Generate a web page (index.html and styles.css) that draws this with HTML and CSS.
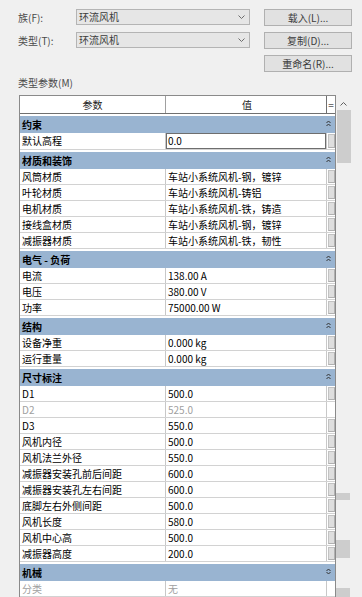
FILE: index.html
```html
<!DOCTYPE html>
<html lang="zh-CN">
<head>
<meta charset="utf-8">
<title>类型属性</title>
<link rel="stylesheet" href="styles.css">
</head>
<body>
<div class="panel">
  <div class="top">
    <span class="lbl">族(F):</span>
    <div class="sel"><span>环流风机</span><svg class="chev" width="7" height="4" viewBox="0 0 7 4"><polyline points="0.5,0.5 3.5,3.5 6.5,0.5" fill="none" stroke="#6d6d6d" stroke-width="1"/></svg></div>
    <button class="btn">载入(L)...</button>
    <span class="lbl">类型(T):</span>
    <div class="sel"><span>环流风机</span><svg class="chev" width="7" height="4" viewBox="0 0 7 4"><polyline points="0.5,0.5 3.5,3.5 6.5,0.5" fill="none" stroke="#6d6d6d" stroke-width="1"/></svg></div>
    <button class="btn">复制(D)...</button>
    <button class="btn">重命名(R)...</button>
  </div>
  <div class="caption">类型参数(M)</div>
  <div class="gridwrap">
    <div class="grid">
      <div class="hdr"><div class="c name">参数</div><div class="c val">值</div><div class="c eq">=</div></div>

      <div class="cat"><span>约束</span><svg class="col" width="5" height="7" viewBox="0 0 5 7"><polyline points="0.5,3 2.5,1 4.5,3" fill="none" stroke="#333" stroke-width="1"/><polyline points="0.5,6 2.5,4 4.5,6" fill="none" stroke="#333" stroke-width="1"/></svg></div>
      <div class="row first"><div class="c name">默认高程</div><div class="c val edit">0.0</div><div class="c eq"><i class="pb"></i></div></div>

      <div class="cat"><span>材质和装饰</span><svg class="col" width="5" height="7" viewBox="0 0 5 7"><polyline points="0.5,3 2.5,1 4.5,3" fill="none" stroke="#333" stroke-width="1"/><polyline points="0.5,6 2.5,4 4.5,6" fill="none" stroke="#333" stroke-width="1"/></svg></div>
      <div class="row"><div class="c name">风筒材质</div><div class="c val">车站小系统风机-钢，镀锌</div><div class="c eq"><i class="pb"></i></div></div>
      <div class="row"><div class="c name">叶轮材质</div><div class="c val">车站小系统风机-铸铝</div><div class="c eq"><i class="pb"></i></div></div>
      <div class="row"><div class="c name">电机材质</div><div class="c val">车站小系统风机-铁，铸造</div><div class="c eq"><i class="pb"></i></div></div>
      <div class="row"><div class="c name">接线盒材质</div><div class="c val">车站小系统风机-钢，镀锌</div><div class="c eq"><i class="pb"></i></div></div>
      <div class="row"><div class="c name">减振器材质</div><div class="c val">车站小系统风机-铁，韧性</div><div class="c eq"><i class="pb"></i></div></div>

      <div class="cat"><span>电气 - 负荷</span><svg class="col" width="5" height="7" viewBox="0 0 5 7"><polyline points="0.5,3 2.5,1 4.5,3" fill="none" stroke="#333" stroke-width="1"/><polyline points="0.5,6 2.5,4 4.5,6" fill="none" stroke="#333" stroke-width="1"/></svg></div>
      <div class="row"><div class="c name">电流</div><div class="c val">138.00 A</div><div class="c eq"><i class="pb"></i></div></div>
      <div class="row"><div class="c name">电压</div><div class="c val">380.00 V</div><div class="c eq"><i class="pb"></i></div></div>
      <div class="row"><div class="c name">功率</div><div class="c val">75000.00 W</div><div class="c eq"><i class="pb"></i></div></div>

      <div class="cat"><span>结构</span><svg class="col" width="5" height="7" viewBox="0 0 5 7"><polyline points="0.5,3 2.5,1 4.5,3" fill="none" stroke="#333" stroke-width="1"/><polyline points="0.5,6 2.5,4 4.5,6" fill="none" stroke="#333" stroke-width="1"/></svg></div>
      <div class="row"><div class="c name">设备净重</div><div class="c val">0.000 kg</div><div class="c eq"><i class="pb"></i></div></div>
      <div class="row"><div class="c name">运行重量</div><div class="c val">0.000 kg</div><div class="c eq"><i class="pb"></i></div></div>

      <div class="cat"><span>尺寸标注</span><svg class="col" width="5" height="7" viewBox="0 0 5 7"><polyline points="0.5,3 2.5,1 4.5,3" fill="none" stroke="#333" stroke-width="1"/><polyline points="0.5,6 2.5,4 4.5,6" fill="none" stroke="#333" stroke-width="1"/></svg></div>
      <div class="row"><div class="c name">D1</div><div class="c val">500.0</div><div class="c eq"><i class="pb"></i></div></div>
      <div class="row dim"><div class="c name">D2</div><div class="c val">525.0</div><div class="c eq"></div></div>
      <div class="row"><div class="c name">D3</div><div class="c val">550.0</div><div class="c eq"><i class="pb"></i></div></div>
      <div class="row"><div class="c name">风机内径</div><div class="c val">500.0</div><div class="c eq"><i class="pb"></i></div></div>
      <div class="row"><div class="c name">风机法兰外径</div><div class="c val">550.0</div><div class="c eq"><i class="pb"></i></div></div>
      <div class="row"><div class="c name">减振器安装孔前后间距</div><div class="c val">600.0</div><div class="c eq"><i class="pb"></i></div></div>
      <div class="row"><div class="c name">减振器安装孔左右间距</div><div class="c val">600.0</div><div class="c eq"><i class="pb"></i></div></div>
      <div class="row"><div class="c name">底脚左右外侧间距</div><div class="c val">500.0</div><div class="c eq"><i class="pb"></i></div></div>
      <div class="row"><div class="c name">风机长度</div><div class="c val">580.0</div><div class="c eq"><i class="pb"></i></div></div>
      <div class="row"><div class="c name">风机中心高</div><div class="c val">500.0</div><div class="c eq"><i class="pb"></i></div></div>
      <div class="row"><div class="c name">减振器高度</div><div class="c val">200.0</div><div class="c eq"><i class="pb"></i></div></div>

      <div class="cat"><span>机械</span><svg class="col" width="5" height="7" viewBox="0 0 5 7"><polyline points="0.5,3 2.5,1 4.5,3" fill="none" stroke="#333" stroke-width="1"/><polyline points="0.5,4 2.5,6 4.5,4" fill="none" stroke="#333" stroke-width="1"/></svg></div>
      <div class="row dim"><div class="c name">分类</div><div class="c val">无</div><div class="c eq"></div></div>
    </div>
    <div class="vscroll">
      <svg class="up" width="7" height="4" viewBox="0 0 7 4"><polyline points="0.5,3.5 3.5,0.5 6.5,3.5" fill="none" stroke="#606060" stroke-width="1"/></svg>
      <div class="thumb"></div>
      <div class="ghost g1"></div>
      <div class="ghost g2"></div>
      <div class="ghost g3"></div>
    </div>
  </div>
</div>
</body>
</html>
```

FILE: styles.css
```css
html, body {
  margin: 0;
  padding: 0;
}
body {
  width: 362px;
  height: 597px;
  overflow: hidden;
  background: #f0f0f0;
  font-family: "Noto Sans CJK SC", "Noto Sans", sans-serif;
  font-size: 10px;
  color: #000;
}
.panel {
  padding: 9px 0 0 18px;
}
.top {
  display: grid;
  grid-template-columns: 58px 174px 14px 88px;
  grid-template-rows: 17px 17px 17px;
  row-gap: 6px;
  align-items: center;
}
.lbl {
  grid-column: 1;
  color: #4a4a4a;
  font-size: 10px;
  line-height: 16px;
}
.sel {
  grid-column: 2;
  height: 16px;
  box-sizing: border-box;
  border: 1px solid #b4b4b4;
  background: #e6e6e6;
  display: flex;
  align-items: center;
  justify-content: space-between;
  padding: 0 4px 0 2px;
  color: #3c3c3c;
  align-self: start;
}
.sel span { line-height: 14px; }
.chev { display: block; }
.btn {
  grid-column: 4;
  height: 17px;
  box-sizing: border-box;
  border: 1px solid #b0b0b0;
  background: #e1e1e1;
  font-family: inherit;
  font-size: 10px;
  color: #3c3c3c;
  padding: 0;
  line-height: 15px;
}
.caption {
  margin-top: 4px;
  color: #4a4a4a;
  line-height: 14px;
}
.gridwrap {
  display: flex;
  margin-left: 1px;
  margin-top: 5px;
}
.grid {
  width: 317px;
  box-sizing: border-box;
  border: 1px solid #8a8a8a;
  border-bottom: none;
  background: #fff;
  height: 502px;
  overflow: hidden;
}
.hdr, .row {
  display: flex;
}
.hdr {
  height: 18px;
  box-sizing: border-box;
  border-bottom: 1px solid #707070;
  background: #fff;
  color: #222;
}
.hdr .c {
  text-align: center;
  line-height: 17px;
}
.hdr .eq {
  border-left: 1px solid #707070;
  color: #555;
  display: block;
  padding: 0;
}
.c {
  box-sizing: border-box;
  white-space: nowrap;
  overflow: hidden;
}
.name {
  width: 146px;
  border-right: 1px solid #c8c8c8;
  padding-left: 2px;
}
.hdr .name { padding-left: 0; border-right: 1px solid #a0a0a0; }
.val {
  width: 160px;
  padding-left: 2px;
}
.eq {
  width: 9px;
  border-left: 1px solid #c8c8c8;
  display: flex;
  padding: 1px 0 1px 1px;
}
.row {
  height: 16px;
  box-sizing: border-box;
  border-bottom: 1px solid #d2d2d2;
  line-height: 15px;
}
.row.first { height: 17px; line-height: 16px; }
.row .val.edit {
  border: 1px solid #6e6e6e;
  line-height: 14px;
  padding-left: 1px;
}
.row.dim .c { color: #a0a0a0; }
.pb {
  display: block;
  flex: 1;
  background: #dedede;
  border: 1px solid #c2c2c2;
  border-right-color: #b0b0b0;
  border-bottom-color: #b0b0b0;
}
.cat {
  height: 19px;
  box-sizing: border-box;
  border-top: 2px solid #fff;
  background: #99b4d1;
  font-weight: bold;
  line-height: 17px;
  padding-left: 2px;
  display: flex;
  align-items: flex-start;
  justify-content: space-between;
  padding-right: 4px;
}
.col {
  display: block;
  margin-top: 4px;
}
.vscroll {
  width: 15px;
  height: 502px;
  background: #f0f0f0;
  position: relative;
  display: flex;
  flex-direction: column;
  align-items: center;
}
.up {
  display: block;
  margin-top: 7px;
}
.thumb {
  width: 14px;
  height: 53px;
  margin-top: 4px;
  background: #cdcdcd;
}
.ghost {
  position: absolute;
  left: 0;
  width: 14px;
  background: #cdcdcd;
}
.g1 { top: 398px; height: 7px; }
.g2 { top: 445px; height: 18px; }
.g3 { top: 493px; height: 10px; }
```
